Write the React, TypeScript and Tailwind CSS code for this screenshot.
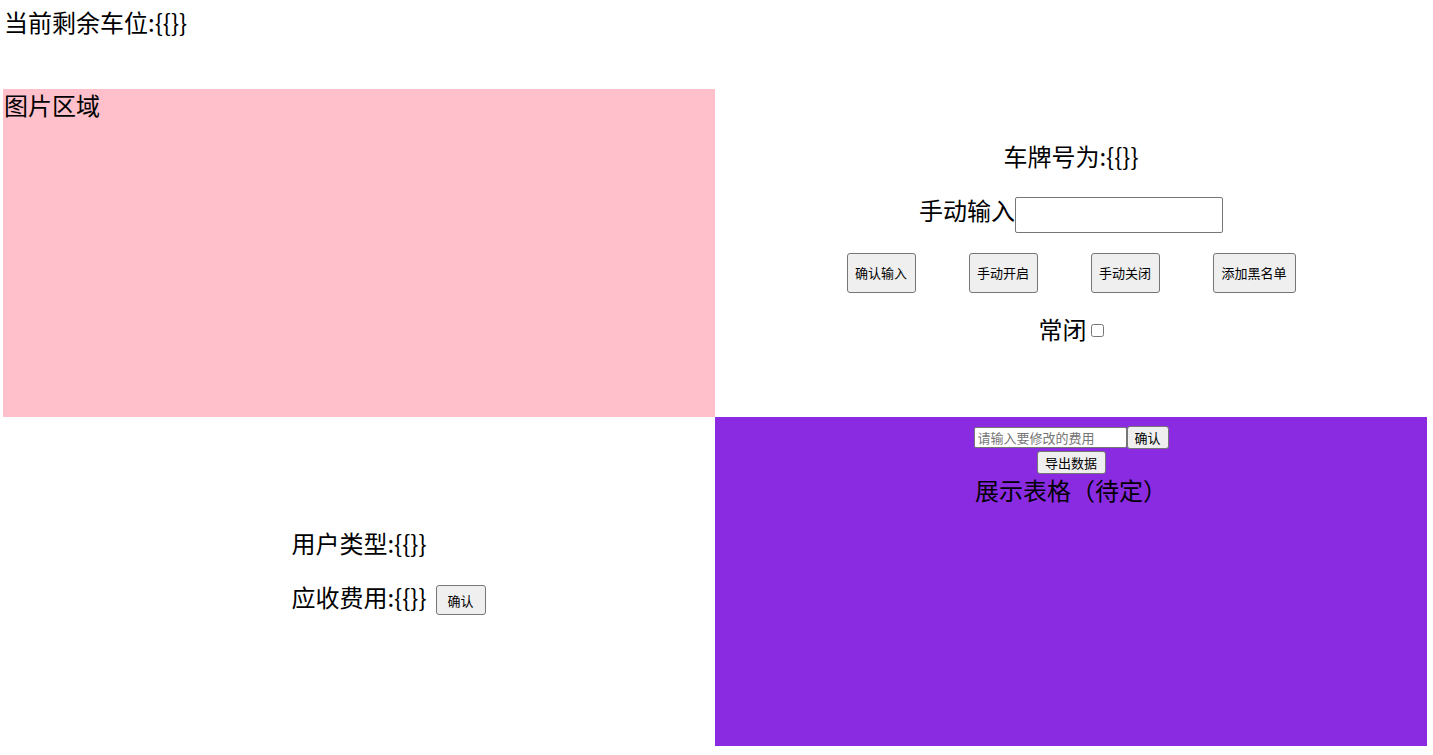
import React from "react";

const btn =
  "bg-[#efefef] border border-[#767676] rounded-[3px] text-[13px] leading-none text-black flex items-center justify-center";

export default function App() {
  return (
    <div className="min-h-screen bg-white text-black font-['Noto_Sans_CJK_SC','Noto_Sans',sans-serif]">
      {/* Header */}
      <div className="h-[89px] pt-[5px] px-[4px] text-[24px] leading-[34px]">当前剩余车位:{"{{}}"}</div>

      <div className="ml-[3px] grid w-[1424px] grid-cols-2 grid-rows-[328px_329px]">
        {/* Image area */}
        <div className="bg-[#ffc0cb] px-[1px] text-[24px] leading-[32px]">图片区域</div>

        {/* Plate controls */}
        <div className="flex flex-col items-center pt-[50px]">
          <div className="text-[24px] leading-[34px]">车牌号为:{"{{}}"}</div>
          <div className="mt-[20px] flex items-baseline">
            <span className="text-[24px] leading-[34px]">手动输入</span>
            <input
              type="text"
              className="h-[36px] w-[208px] rounded-[2px] border border-[#767676] bg-white px-[3px] text-[13px] outline-none"
            />
          </div>
          <div className="mt-[20px] flex gap-[53px]">
            <button className={`${btn} h-[40px] w-[69px]`}>确认输入</button>
            <button className={`${btn} h-[40px] w-[69px]`}>手动开启</button>
            <button className={`${btn} h-[40px] w-[69px]`}>手动关闭</button>
            <button className={`${btn} h-[40px] w-[83px]`}>添加黑名单</button>
          </div>
          <div className="mt-[19px] flex items-center">
            <span className="text-[24px] leading-[34px]">常闭</span>
            <input type="checkbox" className="ml-[4px] mt-[3px] h-[13px] w-[13px]" />
          </div>
        </div>

        {/* User info */}
        <div className="pt-[109px]">
          <div className="text-center text-[24px] leading-[34px]">用户类型:{"{{}}"}</div>
          <div className="mt-[19px] grid grid-cols-[1fr_auto_1fr] items-center">
            <span />
            <span className="text-[24px] leading-[34px]">应收费用:{"{{}}"}</span>
            <div className="flex">
              <button className={`${btn} ml-[9px] mt-[6px] h-[30px] w-[50px]`}>确认</button>
            </div>
          </div>
        </div>

        {/* Table area */}
        <div className="flex flex-col items-center bg-[#8a2be2] pt-[9px]">
          <div className="flex items-center">
            <input
              type="text"
              placeholder="请输入要修改的费用"
              className="h-[21px] w-[153px] rounded-[2px] border border-[#767676] bg-white px-[3px] text-[13px] text-black outline-none placeholder:text-[#757575]"
            />
            <button className={`${btn} h-[23px] w-[42px]`}>确认</button>
          </div>
          <button className={`${btn} mt-[2px] h-[23px] w-[69px]`}>导出数据</button>
          <div className="mt-[1px] text-[24px] leading-[30px]">展示表格（待定）</div>
        </div>
      </div>
    </div>
  );
}
